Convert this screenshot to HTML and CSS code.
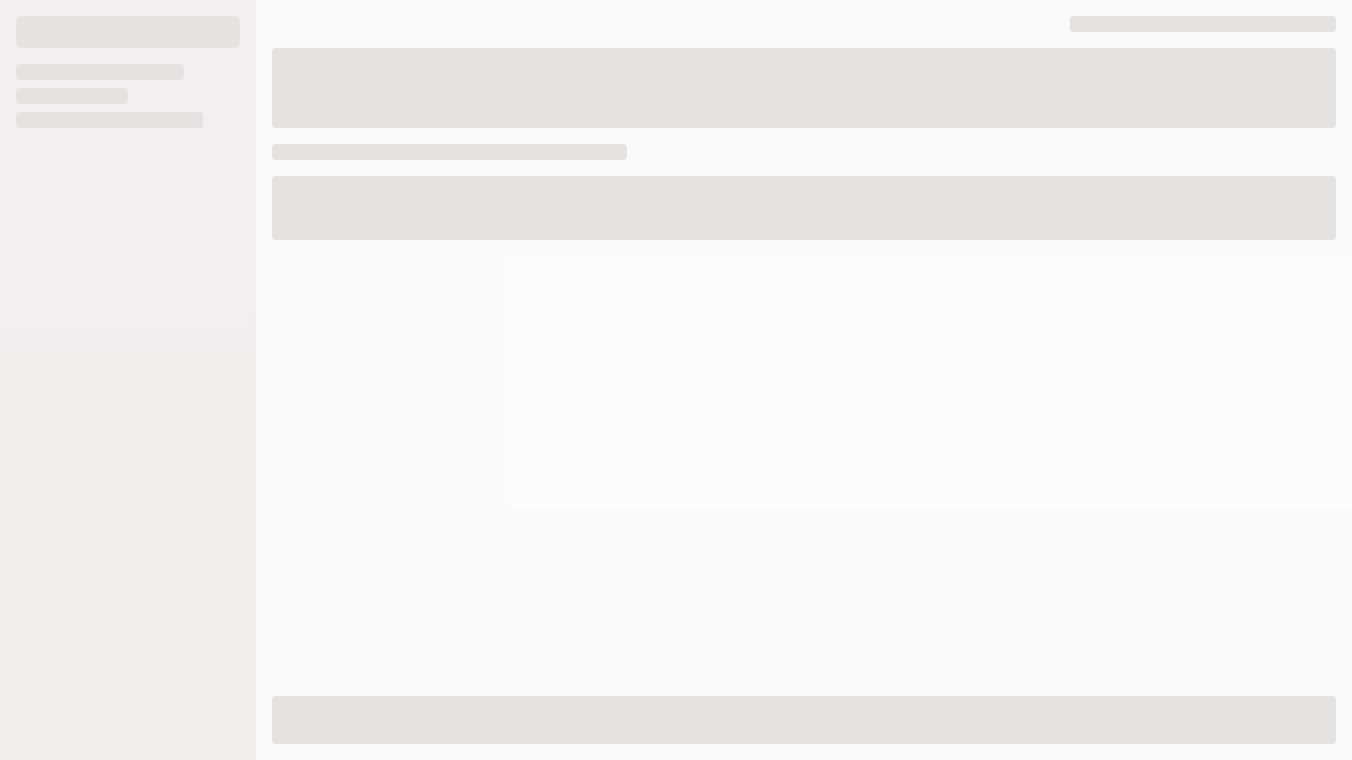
FILE: index.html
```html
<!DOCTYPE html>
<html lang="en">
<head>
    <meta charset="UTF-8">
    <meta name="viewport" content="width=device-width, initial-scale=1.0">
    <title>Loading</title>
    <link rel="stylesheet" href="styles.css">
</head>
<body>
    <!-- 侧边栏骨架 -->
    <aside class="sidebar">
        <div class="skel sidebar-head"></div>
        <div class="sidebar-lines">
            <div class="skel line" style="width: 168px;"></div>
            <div class="skel line" style="width: 112px;"></div>
            <div class="skel line" style="width: 187px;"></div>
        </div>
    </aside>

    <!-- 主内容骨架 -->
    <main class="main">
        <div class="toolbar">
            <div class="skel line" style="width: 266px;"></div>
        </div>
        <div class="skel hero"></div>
        <div class="skel line" style="width: 355px;"></div>
        <div class="skel panel"></div>
        <div class="content-row">
            <div class="ghost"></div>
        </div>
        <div class="skel footer-bar"></div>
    </main>
</body>
</html>
```

FILE: styles.css
```css
/* 基础样式 */
html, body {
    margin: 0;
    padding: 0;
    height: 100%;
}

body {
    font-family: "Liberation Sans", Arial, sans-serif;
    background-color: #fafafa;
    display: flex;
    height: 100vh;
    overflow: hidden;
}

/* 骨架块 */
.skel {
    background-color: #e5e3e1;
    border-radius: 4px;
}

.line {
    height: 16px;
}

/* 侧边栏 */
.sidebar {
    width: 256px;
    flex-shrink: 0;
    box-sizing: border-box;
    padding: 16px;
    background: linear-gradient(#f1eff0, #f0efed);
    display: flex;
    flex-direction: column;
    gap: 16px;
}

.sidebar-head {
    height: 32px;
    border-radius: 6px;
}

.sidebar-lines {
    display: flex;
    flex-direction: column;
    gap: 8px;
}

/* 主内容 */
.main {
    flex: 1;
    box-sizing: border-box;
    padding: 16px;
    display: flex;
    flex-direction: column;
    gap: 16px;
    min-width: 0;
}

.toolbar {
    display: flex;
    justify-content: flex-end;
}

.hero {
    height: 80px;
}

.panel {
    height: 64px;
}

.content-row {
    display: flex;
    height: 252px;
    margin-right: -16px;
}

.ghost {
    flex: 1;
    margin-left: 236px;
    background-color: #fcfcfc;
}

.footer-bar {
    height: 48px;
    margin-top: auto;
}
```
